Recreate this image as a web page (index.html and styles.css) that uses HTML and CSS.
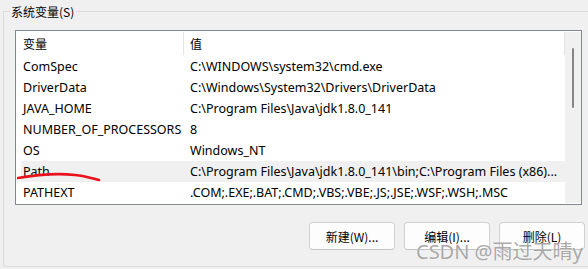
FILE: index.html
```html
<!DOCTYPE html>
<html lang="zh-CN">
<head>
    <meta charset="UTF-8">
    <title>系统变量</title>
    <link rel="stylesheet" href="styles.css">
</head>
<body>
    <fieldset class="group">
        <legend>系统变量(S)</legend>
        <div class="listview">
            <div class="list-body">
                <div class="row header">
                    <div class="col name">变量</div>
                    <div class="col value">值</div>
                </div>
                <div class="row"><div class="col name">ComSpec</div><div class="col value">C:\WINDOWS\system32\cmd.exe</div></div>
                <div class="row"><div class="col name">DriverData</div><div class="col value">C:\Windows\System32\Drivers\DriverData</div></div>
                <div class="row"><div class="col name">JAVA_HOME</div><div class="col value">C:\Program Files\Java\jdk1.8.0_141</div></div>
                <div class="row"><div class="col name">NUMBER_OF_PROCESSORS</div><div class="col value">8</div></div>
                <div class="row"><div class="col name">OS</div><div class="col value">Windows_NT</div></div>
                <div class="row selected"><div class="col name">Path</div><div class="col value">C:\Program Files\Java\jdk1.8.0_141\bin;C:\Program Files (x86)...</div></div>
                <div class="row"><div class="col name">PATHEXT</div><div class="col value">.COM;.EXE;.BAT;.CMD;.VBS;.VBE;.JS;.JSE;.WSF;.WSH;.MSC</div></div>
            </div>
            <div class="scrollbar"><div class="thumb"></div></div>
        </div>
        <div class="buttons">
            <button>新建(W)...</button>
            <button>编辑(I)...</button>
            <button>删除(L)</button>
        </div>
    </fieldset>

    <svg class="scribble" width="90" height="20" viewBox="0 0 90 20">
        <path d="M1 10 C 18 7, 40 5, 58 7 C 68 8, 74 10, 82 12" fill="none" stroke="#e8111c" stroke-width="2.6" stroke-linecap="round"/>
    </svg>
    <div class="watermark">CSDN @雨过天晴y</div>
</body>
</html>
```

FILE: styles.css
```css
body {
    margin: 0;
    width: 588px;
    height: 269px;
    background-color: #f0f0f0;
    font-family: "Noto Sans", "Noto Sans CJK SC", sans-serif;
    font-size: 12.5px;
    color: #000;
    overflow: hidden;
    position: relative;
}
.group {
    margin: 11px 0 0 3px;
    width: 586px;
    height: 256px;
    box-sizing: border-box;
    border: 1px solid #dcdcdc;
    border-right: none;
    padding: 0;
    position: relative;
}
.group legend {
    position: absolute;
    top: -8px;
    left: 6px;
    padding: 0 2px 0 1px;
    background-color: #f0f0f0;
    line-height: 15px;
    font-size: 12px;
    font-family: "Noto Sans CJK SC", sans-serif;
}
.listview {
    margin: 18px 0 0 11px;
    width: 567px;
    height: 175px;
    box-sizing: border-box;
    border: 1px solid #828790;
    background-color: #fff;
    display: flex;
}
.list-body {
    flex: 1;
    padding-left: 5px;
    min-width: 0;
}
.row {
    display: grid;
    grid-template-columns: 163px 1fr;
    height: 21px;
    line-height: 21px;
    white-space: nowrap;
}
.row.header {
    height: 25px;
    line-height: 23px;
    margin-left: -5px;
    grid-template-columns: 168px 1fr;
}
.row.header .name {
    padding-left: 7px;
    border-right: 1px solid #e5e5e5;
    margin: 1px 0;
    font-size: 12px;
    font-family: "Noto Sans CJK SC", sans-serif;
}
.row.header .value {
    padding-left: 6px;
    border-right: 1px solid #e5e5e5;
    margin: 1px 0;
    font-size: 12px;
    font-family: "Noto Sans CJK SC", sans-serif;
}
.col.name {
    padding-left: 2px;
}
.col.value {
    padding-left: 6px;
    overflow: hidden;
}
.row.selected {
    background-color: #f0f0f0;
}
.scrollbar {
    width: 16px;
    margin: 1px 0;
    background-color: #f0f0f0;
    position: relative;
    flex-shrink: 0;
}
.thumb {
    position: absolute;
    left: 7px;
    top: 16px;
    width: 2px;
    height: 60px;
    background-color: #858585;
    border-radius: 1px;
}
.buttons {
    display: flex;
    justify-content: flex-end;
    gap: 9px;
    margin: 17px 4px 0 0;
}
.buttons button {
    width: 86px;
    height: 28px;
    border: 1px solid #d0d0d0;
    border-bottom-color: #c2c2c2;
    border-radius: 4px;
    background-color: #fdfdfd;
    font-family: "Noto Sans CJK SC", sans-serif;
    font-size: 12px;
    color: #000;
    padding: 0;
}
.scribble {
    position: absolute;
    left: 17px;
    top: 168px;
}
.watermark {
    position: absolute;
    left: 416px;
    top: 236px;
    font-family: "Noto Sans", "Noto Sans CJK SC", sans-serif;
    font-size: 20px;
    color: rgba(130, 130, 130, 0.7);
    text-shadow: 0 0 1px #fff;
    white-space: nowrap;
}
```
